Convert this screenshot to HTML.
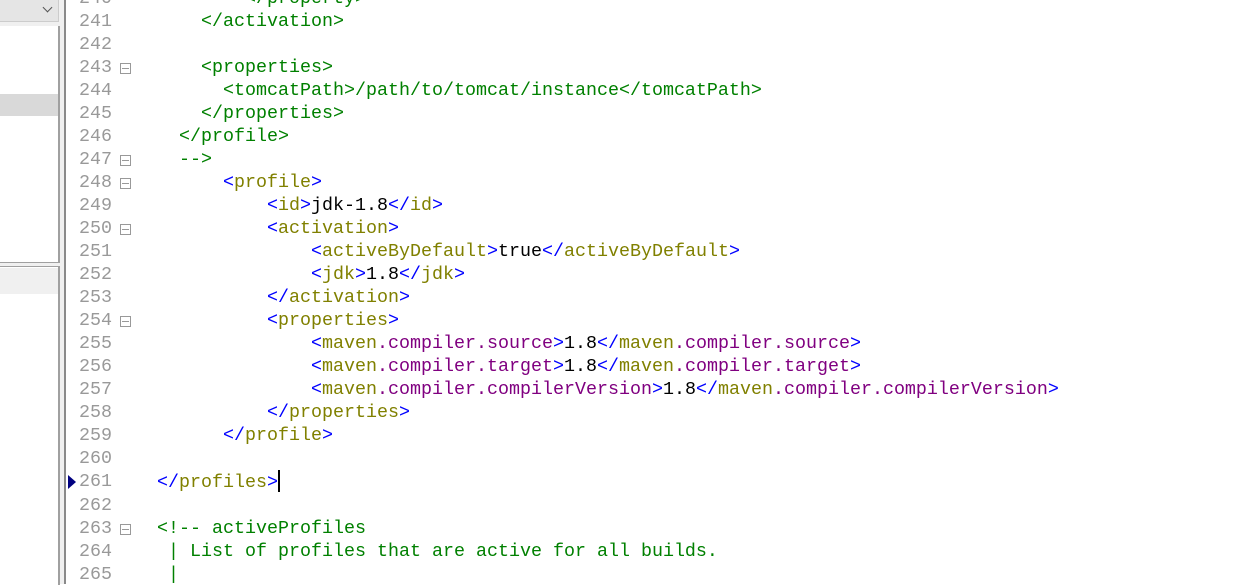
<!DOCTYPE html>
<html><head><meta charset="utf-8"><style>
body{margin:0;width:1234px;height:584px;overflow:hidden;background:#fff;position:relative;font-family:"Liberation Mono",monospace}
.lp{position:absolute;left:0;top:0;width:64px;height:584px;background:#f0f0f0}
.dd{position:absolute;left:0;top:0;width:58px;height:21px;background:#e5e5e5;border-bottom:1px solid #ccc;border-right:1px solid #ccc}
.dd span{position:absolute;left:44px;top:4px;width:6px;height:6px;border-right:1px solid #555;border-bottom:1px solid #555;transform:rotate(45deg)}
.lb{position:absolute;left:0;top:26px;width:58px;height:236px;background:#fff;border-right:2px solid #a0a0a0;border-bottom:1px solid #a0a0a0}
.lb2{position:absolute;left:0;top:266px;width:58px;height:318px;background:#fff;border-right:2px solid #a0a0a0;border-top:1px solid #a0a0a0}
.vl{position:absolute;left:64px;top:0;width:2px;height:584px;background:#8a8a8a}
.code{position:absolute;left:66px;top:-13px;font-size:18.33px;line-height:23px;white-space:pre}
.ln{display:inline-block;width:46px;text-align:right;color:#999;vertical-align:top;height:23px}
.f{display:inline-block;width:45px;height:23px;position:relative;vertical-align:top}
.f i{position:absolute;left:8px;top:7px;width:11px;height:11px;border:1px solid #999;box-sizing:border-box}
.f i:after{content:"";position:absolute;left:1px;right:1px;top:4px;height:1px;background:#999}
.c{color:#008000}.b{color:#0000ff}.t{color:#808000}.p{color:#800080}.k{color:#000}
.cur{display:inline-block;width:2px;height:22px;background:#000;vertical-align:-5px}
.mk{position:absolute;left:68px;top:475px;width:0;height:0;border-top:7px solid transparent;border-bottom:7px solid transparent;border-left:8px solid #000080}
</style></head><body>
<div class="lp"></div>
<div class="dd"><span></span></div>
<div class="lb"><div style="position:absolute;top:68px;left:0;width:58px;height:22px;background:#d9d9d9"></div></div>
<div class="lb2"><div style="position:absolute;top:1px;left:0;width:58px;height:26px;background:#f0f0f0"></div></div>
<div class="vl"></div>
<div class="mk"></div>
<div class="code"><span class="ln">240</span><span class="f"></span><span class="c">        &lt;/property&gt;</span>
<span class="ln">241</span><span class="f"></span><span class="c">    &lt;/activation&gt;</span>
<span class="ln">242</span><span class="f"></span>
<span class="ln">243</span><span class="f"><i></i></span><span class="c">    &lt;properties&gt;</span>
<span class="ln">244</span><span class="f"></span><span class="c">      &lt;tomcatPath&gt;/path/to/tomcat/instance&lt;/tomcatPath&gt;</span>
<span class="ln">245</span><span class="f"></span><span class="c">    &lt;/properties&gt;</span>
<span class="ln">246</span><span class="f"></span><span class="c">  &lt;/profile&gt;</span>
<span class="ln">247</span><span class="f"><i></i></span><span class="c">  --&gt;</span>
<span class="ln">248</span><span class="f"><i></i></span>      <span class="b">&lt;</span><span class="t">profile</span><span class="b">&gt;</span>
<span class="ln">249</span><span class="f"></span>          <span class="b">&lt;</span><span class="t">id</span><span class="b">&gt;</span><span class="k">jdk-1.8</span><span class="b">&lt;/</span><span class="t">id</span><span class="b">&gt;</span>
<span class="ln">250</span><span class="f"><i></i></span>          <span class="b">&lt;</span><span class="t">activation</span><span class="b">&gt;</span>
<span class="ln">251</span><span class="f"></span>              <span class="b">&lt;</span><span class="t">activeByDefault</span><span class="b">&gt;</span><span class="k">true</span><span class="b">&lt;/</span><span class="t">activeByDefault</span><span class="b">&gt;</span>
<span class="ln">252</span><span class="f"></span>              <span class="b">&lt;</span><span class="t">jdk</span><span class="b">&gt;</span><span class="k">1.8</span><span class="b">&lt;/</span><span class="t">jdk</span><span class="b">&gt;</span>
<span class="ln">253</span><span class="f"></span>          <span class="b">&lt;/</span><span class="t">activation</span><span class="b">&gt;</span>
<span class="ln">254</span><span class="f"><i></i></span>          <span class="b">&lt;</span><span class="t">properties</span><span class="b">&gt;</span>
<span class="ln">255</span><span class="f"></span>              <span class="b">&lt;</span><span class="t">maven</span><span class="p">.compiler.source</span><span class="b">&gt;</span><span class="k">1.8</span><span class="b">&lt;/</span><span class="t">maven</span><span class="p">.compiler.source</span><span class="b">&gt;</span>
<span class="ln">256</span><span class="f"></span>              <span class="b">&lt;</span><span class="t">maven</span><span class="p">.compiler.target</span><span class="b">&gt;</span><span class="k">1.8</span><span class="b">&lt;/</span><span class="t">maven</span><span class="p">.compiler.target</span><span class="b">&gt;</span>
<span class="ln">257</span><span class="f"></span>              <span class="b">&lt;</span><span class="t">maven</span><span class="p">.compiler.compilerVersion</span><span class="b">&gt;</span><span class="k">1.8</span><span class="b">&lt;/</span><span class="t">maven</span><span class="p">.compiler.compilerVersion</span><span class="b">&gt;</span>
<span class="ln">258</span><span class="f"></span>          <span class="b">&lt;/</span><span class="t">properties</span><span class="b">&gt;</span>
<span class="ln">259</span><span class="f"></span>      <span class="b">&lt;/</span><span class="t">profile</span><span class="b">&gt;</span>
<span class="ln">260</span><span class="f"></span>
<span class="ln">261</span><span class="f"></span><span class="b">&lt;/</span><span class="t">profiles</span><span class="b">&gt;</span><span class="cur"></span>
<span class="ln">262</span><span class="f"></span>
<span class="ln">263</span><span class="f"><i></i></span><span class="c">&lt;!-- activeProfiles</span>
<span class="ln">264</span><span class="f"></span><span class="c"> | List of profiles that are active for all builds.</span>
<span class="ln">265</span><span class="f"></span><span class="c"> |</span>
</div>
</body></html>
